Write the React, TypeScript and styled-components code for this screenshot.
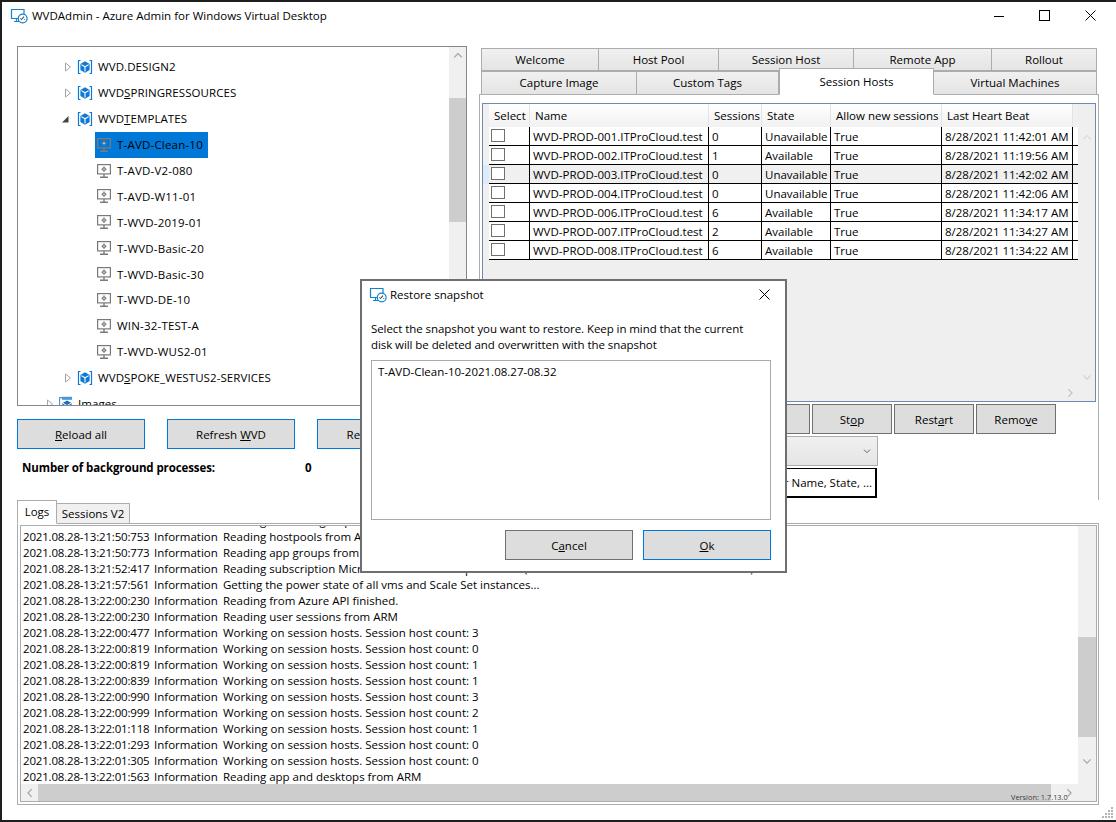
import React from 'react';
import styled, { createGlobalStyle } from 'styled-components';

const FONT = '"Open Sans", "Noto Sans", sans-serif';

const GlobalStyle = createGlobalStyle`
  html, body {
    margin: 0;
    padding: 0;
    background: #1e1e1e;
  }
  * {
    box-sizing: border-box;
  }
`;

// Outer window
const Window = styled.div`
  position: relative;
  width: 1116px;
  height: 822px;
  padding: 2px 0 2px 2px;
  background: #1e1e1e;
  font-family: ${FONT};
  font-size: 11.5px;
  color: #000;
  overflow: hidden;
`;

const Frame = styled.div`
  height: 100%;
  background: #fff;
  display: flex;
  flex-direction: column;
`;

const TitleBar = styled.div`
  height: 27px;
  flex: none;
  display: flex;
  align-items: center;
  padding-left: 8px;
  gap: 4px;
`;

const TitleText = styled.span`
  flex: 1;
`;

const WindowControls = styled.div`
  display: flex;
  align-items: center;
  padding-right: 20px;
  gap: 35px;
`;

const Content = styled.div`
  flex: 1;
  display: flex;
  flex-direction: column;
  padding: 17px 0 0 15px;
`;

const TopArea = styled.div`
  display: grid;
  grid-template-columns: 450px 620px;
  column-gap: 12px;
  height: 454px;
`;

const LeftColumn = styled.div`
  display: flex;
  flex-direction: column;
`;

// Tree
const Tree = styled.div`
  height: 360px;
  display: flex;
  border: 1px solid #828790;
  overflow: hidden;
`;

const TreeList = styled.div`
  flex: 1;
  padding-top: 7px;
  overflow: hidden;
`;

const TreeRow = styled.div<{ $indent: number }>`
  height: 25.9px;
  display: flex;
  align-items: center;
  padding-left: ${({ $indent }) => $indent}px;
  white-space: nowrap;
`;

const Expander = styled.span`
  width: 13px;
  display: flex;
  align-items: center;
  flex: none;
`;

const NodeLabel = styled.span<{ $selected?: boolean }>`
  height: 100%;
  display: flex;
  align-items: center;
  gap: 6px;
  padding: 0 5px 0 2px;
  letter-spacing: 0.2px;
  background: ${({ $selected }) => ($selected ? '#0078d7' : 'transparent')};
`;

const GroupLabel = styled.span`
  display: flex;
  align-items: center;
  gap: 5px;
  letter-spacing: 0.08px;
`;

const ScrollTrackV = styled.div<{ $width?: number }>`
  width: ${({ $width }) => $width ?? 17}px;
  flex: none;
  background: #f0f0f0;
  display: flex;
  flex-direction: column;
`;

const ScrollButton = styled.div<{ $size?: number; $end?: boolean }>`
  height: ${({ $size }) => $size ?? 17}px;
  flex: none;
  display: flex;
  align-items: center;
  justify-content: center;
  ${({ $end }) => ($end ? 'margin-top: auto;' : '')}
`;

const Thumb = styled.div<{ $offset: number; $length: number }>`
  margin-top: ${({ $offset }) => $offset}px;
  height: ${({ $length }) => $length}px;
  flex: none;
  background: #cdcdcd;
`;

const ButtonRow = styled.div`
  display: flex;
  gap: 22px;
  margin-top: 13px;
`;

const Button = styled.div<{ $focused?: boolean; $width?: number }>`
  width: ${({ $width }) => $width ?? 128}px;
  height: 30px;
  flex: none;
  display: flex;
  align-items: center;
  justify-content: center;
  background: #dddddd;
  border: 1px solid ${({ $focused }) => ($focused ? '#0078d7' : '#707070')};
  white-space: nowrap;
  overflow: hidden;
`;

const ProcessRow = styled.div`
  display: flex;
  margin-top: 9px;
  padding-left: 5px;
  height: 18px;
  align-items: center;
  font-weight: 700;
`;

const ProcessLabel = styled.span`
  width: 283px;
  letter-spacing: -0.1px;
`;

// Right tabs
const RightColumn = styled.div`
  padding-top: 2px;
  display: flex;
  flex-direction: column;
`;

const TabRow = styled.div<{ $overlap?: boolean }>`
  display: flex;
  height: ${({ $overlap }) => ($overlap ? '24px' : '23px')};
  margin-left: 2px;
  position: relative;
  z-index: 1;
  ${({ $overlap }) => ($overlap ? 'margin-bottom: -1px;' : '')}
`;

const Tab = styled.div<{ $width: number; $active?: boolean; $lower?: boolean }>`
  width: ${({ $width }) => $width}px;
  flex: none;
  display: flex;
  align-items: center;
  justify-content: center;
  border: 1px solid #acacac;
  border-left-width: ${({ $active }) => ($active ? '1px' : '0')};
  background: ${({ $active }) => ($active ? '#fff' : 'linear-gradient(#f0f0f0, #e5e5e5)')};
  ${({ $lower }) => ($lower ? 'padding-bottom: 2px;' : '')}
  ${({ $active }) =>
    $active ? 'border-bottom-color: #fff; margin-top: -3px; height: calc(100% + 3px); padding-bottom: 1px;' : ''}
  &:first-child {
    border-left-width: 1px;
  }
`;

const TabPanel = styled.div`
  flex: 1;
  border: 1px solid #acacac;
  border-bottom: none;
  padding: 8px 2px 0 2px;
  display: flex;
  flex-direction: column;
`;

// Session host grid
const HostGrid = styled.div`
  position: relative;
  height: 299px;
  flex: none;
  border: 1px solid #6d8bb0;
  background: #efefef;
`;

const COLUMNS = '6px 41px 179px 53px 69px 111px 131px 5px';

const GridHeader = styled.div`
  display: grid;
  grid-template-columns: ${COLUMNS};
  height: 23px;
  background: linear-gradient(#ffffff, #f1f1f1);
  margin-right: 17px;
`;

const HeaderCell = styled.div`
  display: flex;
  align-items: center;
  padding-left: 5px;
  border-right: 1px solid #e4e4e4;
  white-space: nowrap;
`;

const HeaderGap = styled.div`
  background: #f0f0f0;
`;

const GridRow = styled.div`
  display: grid;
  grid-template-columns: ${COLUMNS};
  height: 19px;
  margin-right: 17px;
`;

const RowMarker = styled.div<{ $current?: boolean }>`
  background: ${({ $current }) => ($current ? '#dcebf7' : '#f0f0f0')};
`;

const GridCell = styled.div<{ $current?: boolean; $open?: boolean }>`
  display: flex;
  align-items: center;
  padding-left: 3px;
  background: ${({ $current }) => ($current ? '#f0f0f0' : '#fff')};
  border-bottom: 1px solid #000;
  border-right: ${({ $open }) => ($open ? 'none' : '1px solid #000')};
  white-space: nowrap;
  overflow: hidden;
`;

const CheckBox = styled.span`
  width: 14px;
  height: 13px;
  margin: -2px 0 0 -1px;
  border: 1px solid #707070;
  background: #fff;
`;

const FloatingChevron = styled.span<{ $left: number; $top: number }>`
  position: absolute;
  left: ${({ $left }) => $left}px;
  top: ${({ $top }) => $top}px;
  display: flex;
`;

const ActionRow = styled.div`
  display: flex;
  gap: 2px;
  margin: 2px 0 0 2px;
`;

const Combo = styled.div`
  width: 394px;
  height: 30px;
  margin: 2px 0 0 2px;
  display: flex;
  align-items: center;
  justify-content: flex-end;
  padding-right: 6px;
  background: linear-gradient(#f0f0f0, #e5e5e5);
  border: 1px solid #acacac;
`;

const FilterBox = styled.div`
  width: 393px;
  height: 30px;
  margin: 2px 0 0 2px;
  display: flex;
  align-items: center;
  justify-content: flex-end;
  padding-right: 3px;
  background: #fff;
  border: 1px solid #000;
  border-right-width: 2px;
  border-bottom-width: 2px;
`;

// Logs
const LogTabs = styled.div`
  display: flex;
  align-items: flex-end;
  height: 24px;
  position: relative;
  z-index: 1;
  margin-bottom: -1px;
`;

const LogTab = styled.div<{ $active?: boolean; $width: number }>`
  width: ${({ $width }) => $width}px;
  height: ${({ $active }) => ($active ? '24px' : '21px')};
  display: flex;
  align-items: center;
  justify-content: center;
  border: 1px solid #acacac;
  background: ${({ $active }) => ($active ? '#fff' : '#f0f0f0')};
  ${({ $active }) => ($active ? 'border-bottom-color: #fff; padding-bottom: 1px;' : 'border-left: none;')}
`;

const LogPanel = styled.div`
  width: 1082px;
  height: 282px;
  border: 1px solid #acacac;
  padding: 1px 1px 2px 2px;
`;

const LogBox = styled.div`
  height: 100%;
  border: 1px solid #acacac;
  display: grid;
  grid-template-columns: 1fr 18px;
  grid-template-rows: 1fr 17px;
`;

const LogList = styled.div`
  overflow: hidden;
  padding-left: 2px;
`;

const LogLines = styled.div`
  margin-top: -14px;
`;

const LogLine = styled.div`
  display: flex;
  height: 16px;
  align-items: center;
  white-space: nowrap;
`;

const LogTime = styled.span`
  width: 131px;
  flex: none;
  letter-spacing: -0.18px;
`;

const LogLevel = styled.span`
  width: 69px;
  flex: none;
`;

const ScrollTrackH = styled.div`
  display: flex;
  background: #f0f0f0;
`;

const ArrowCell = styled.div`
  width: 17px;
  flex: none;
  display: flex;
  align-items: center;
  justify-content: center;
`;

const ThumbH = styled.div`
  width: 1013px;
  flex: none;
  background: #cdcdcd;
`;

const ScrollCorner = styled.div`
  background: #f0f0f0;
`;

const Version = styled.span`
  position: absolute;
  left: 1011px;
  top: 791px;
  font-size: 7.4px;
  line-height: 12px;
  color: #3c3c3c;
`;

const Grip = styled.svg`
  position: absolute;
  left: 1100px;
  top: 806px;
`;

// Dialog
const Dialog = styled.div`
  position: absolute;
  left: 360px;
  top: 279px;
  width: 427px;
  height: 294px;
  background: #fff;
  border: 2px solid #6f6f6f;
  padding: 0 14px 0 9px;
  display: flex;
  flex-direction: column;
  z-index: 5;
`;

const DialogTitle = styled.div`
  height: 27px;
  flex: none;
  display: flex;
  align-items: center;
  gap: 3px;
  margin-left: -2px;
`;

const DialogClose = styled.span`
  margin-left: auto;
  display: flex;
  margin-right: 1px;
`;

const DialogText = styled.p`
  margin: 13px 0 0;
  line-height: 16px;
  height: 32px;
  flex: none;
  letter-spacing: -0.07px;
`;

const SnapshotList = styled.div`
  height: 160px;
  flex: none;
  margin-top: 7px;
  border: 1px solid #aaaaaa;
  padding: 3px 6px;
  line-height: 16px;
`;

const DialogButtons = styled.div`
  display: flex;
  justify-content: flex-end;
  gap: 10px;
  margin-top: 10px;
`;

const AppIcon = () => (
  <svg width="18" height="16" viewBox="0 0 18 16" fill="none">
    <path d="M10 10.5H1.5V1.5H14V6" stroke="#1383d1" strokeWidth="1.2" />
    <path d="M4 13.5h5M6.5 10.5v3" stroke="#1383d1" strokeWidth="1.2" />
    <circle cx="12.7" cy="10.5" r="4.4" fill="#fff" stroke="#1383d1" strokeWidth="1.2" />
    <path d="M11 12l3-3.4" stroke="#4a4a4a" strokeWidth="1.1" />
    <path d="M10.3 10.5h1M14.2 11.5h1" stroke="#1383d1" />
  </svg>
);

const CubeIcon = () => (
  <svg width="16" height="16" viewBox="0 0 16 16" fill="none">
    <path d="M3.5 1.5h-2v13h2M12.5 1.5h2v13h-2" stroke="#0f78d4" strokeWidth="1.2" />
    <path d="M8 2.3 12.6 4.9v6.2L8 13.7 3.4 11.1V4.9z" fill="#0f78d4" />
    <path d="M4.3 5.6 8 7.8l3.7-2.2M8 7.8v4.6" stroke="#fff" strokeWidth="1.1" />
  </svg>
);

const VmIcon = () => (
  <svg width="14" height="16" viewBox="0 0 14 16" fill="none">
    <rect x="0.6" y="1.6" width="12.8" height="9.3" stroke="#7a7a7a" strokeWidth="1.2" />
    <path d="M7 11v2.4M3 14.2h8" stroke="#7a7a7a" strokeWidth="1.4" />
    <circle cx="7" cy="6.2" r="1.9" fill="#7a7a7a" />
    <path d="M7 3.4v5.6M4.4 6.2h5.2" stroke="#7a7a7a" strokeWidth="1" />
    <circle cx="7" cy="6.2" r="0.7" fill="#fff" />
  </svg>
);

const ImagesIcon = () => (
  <svg width="14" height="16" viewBox="0 0 14 16" fill="none">
    <path d="M0.6 1v13M0.6 1.6h2.6" stroke="#4a94d8" strokeWidth="1.1" />
    <rect x="3" y="0.8" width="10" height="3" fill="#4a94d8" />
    <path d="M8 4.5 12.5 7v5L8 14.5 3.5 12V7z" fill="#1470c4" />
    <path d="M4 7.3 8 9.6l4-2.3M8 9.6v4.6" stroke="#fff" strokeWidth="1" />
  </svg>
);

const Collapsed = () => (
  <svg width="8" height="10" viewBox="0 0 8 10" fill="none">
    <path d="M1.5 1v8L6.5 5z" fill="#fff" stroke="#a6a6a6" />
  </svg>
);

const ExpandedMark = styled.svg`
  margin-left: -3px;
`;

const ExpandedArrow = () => (
  <ExpandedMark width="10" height="10" viewBox="0 0 10 10">
    <path d="M1 8.5h6.5V2z" fill="#444" />
  </ExpandedMark>
);

const Chevron = ({
  dir,
  color = '#a6a6a6',
  size = 10,
}: {
  dir: 'up' | 'down' | 'left' | 'right';
  color?: string;
  size?: number;
}) => {
  const paths = {
    up: 'M1.5 7.5 6 3l4.5 4.5',
    down: 'M1.5 4 6 8.5 10.5 4',
    left: 'M8 1.5 3.5 6 8 10.5',
    right: 'M4 1.5 8.5 6 4 10.5',
  };
  return (
    <svg width={size} height={size} viewBox="0 0 12 12" fill="none">
      <path d={paths[dir]} stroke={color} strokeWidth="1.4" />
    </svg>
  );
};

const TOP_TABS = [
  { label: 'Welcome', width: 118 },
  { label: 'Host Pool', width: 120 },
  { label: 'Session Host', width: 135 },
  { label: 'Remote App', width: 138 },
  { label: 'Rollout', width: 105 },
];

const SECOND_TABS = [
  { label: 'Capture Image', width: 156 },
  { label: 'Custom Tags', width: 142 },
  { label: 'Session Hosts', width: 155, active: true },
  { label: 'Virtual Machines', width: 163 },
];

const VMS = ['T-AVD-V2-080', 'T-AVD-W11-01', 'T-WVD-2019-01', 'T-WVD-Basic-20', 'T-WVD-Basic-30', 'T-WVD-DE-10', 'WIN-32-TEST-A', 'T-WVD-WUS2-01'];

const HOSTS = [
  ['WVD-PROD-001.ITProCloud.test', '0', 'Unavailable', 'True', '8/28/2021 11:42:01 AM'],
  ['WVD-PROD-002.ITProCloud.test', '1', 'Available', 'True', '8/28/2021 11:19:56 AM'],
  ['WVD-PROD-003.ITProCloud.test', '0', 'Unavailable', 'True', '8/28/2021 11:42:02 AM'],
  ['WVD-PROD-004.ITProCloud.test', '0', 'Unavailable', 'True', '8/28/2021 11:42:06 AM'],
  ['WVD-PROD-006.ITProCloud.test', '6', 'Available', 'True', '8/28/2021 11:34:17 AM'],
  ['WVD-PROD-007.ITProCloud.test', '2', 'Available', 'True', '8/28/2021 11:34:27 AM'],
  ['WVD-PROD-008.ITProCloud.test', '6', 'Available', 'True', '8/28/2021 11:34:22 AM'],
];

const WORKING = 'Working on session hosts. Session host count: ';

const LOGS = [
  ['2021.08.28-13:21:50:741', 'Reading resource groups from ARM'],
  ['2021.08.28-13:21:50:753', 'Reading hostpools from ARM'],
  ['2021.08.28-13:21:50:773', 'Reading app groups from ARM'],
  ['2021.08.28-13:21:52:417', 'Reading subscription Microsoft Azure Subscription - Tail (06c05e86-0000-41c0-8888-101a12001070)'],
  ['2021.08.28-13:21:57:561', 'Getting the power state of all vms and Scale Set instances...'],
  ['2021.08.28-13:22:00:230', 'Reading from Azure API finished.'],
  ['2021.08.28-13:22:00:230', 'Reading user sessions from ARM'],
  ['2021.08.28-13:22:00:477', WORKING + '3'],
  ['2021.08.28-13:22:00:819', WORKING + '0'],
  ['2021.08.28-13:22:00:819', WORKING + '1'],
  ['2021.08.28-13:22:00:839', WORKING + '1'],
  ['2021.08.28-13:22:00:990', WORKING + '3'],
  ['2021.08.28-13:22:00:999', WORKING + '2'],
  ['2021.08.28-13:22:01:118', WORKING + '1'],
  ['2021.08.28-13:22:01:293', WORKING + '0'],
  ['2021.08.28-13:22:01:305', WORKING + '0'],
  ['2021.08.28-13:22:01:563', 'Reading app and desktops from ARM'],
];

const GRIP_DOTS = [
  [11, 1], [11, 4], [8, 4], [11, 7], [8, 7], [5, 7], [11, 10], [8, 10], [5, 10], [2, 10],
];

export default function App() {
  return (
    <Window>
      <GlobalStyle />
      <Frame>
        <TitleBar>
          <AppIcon />
          <TitleText>WVDAdmin - Azure Admin for Windows Virtual Desktop</TitleText>
          <WindowControls>
            <svg width="10" height="10" viewBox="0 0 10 10"><path d="M0 5.5h10" stroke="#000" /></svg>
            <svg width="11" height="11" viewBox="0 0 11 11" fill="none"><rect x="0.5" y="0.5" width="10" height="10" stroke="#000" /></svg>
            <svg width="11" height="11" viewBox="0 0 11 11" fill="none"><path d="M.5.5l10 10M10.5.5l-10 10" stroke="#000" /></svg>
          </WindowControls>
        </TitleBar>

        <Content>
          <TopArea>
            <LeftColumn>
              <Tree>
                <TreeList>
                  <TreeRow $indent={46}>
                    <Expander><Collapsed /></Expander>
                    <GroupLabel><CubeIcon />WVD.DESIGN2</GroupLabel>
                  </TreeRow>
                  <TreeRow $indent={46}>
                    <Expander><Collapsed /></Expander>
                    <GroupLabel><CubeIcon /><span>WVD<u>S</u>PRINGRESSOURCES</span></GroupLabel>
                  </TreeRow>
                  <TreeRow $indent={46}>
                    <Expander><ExpandedArrow /></Expander>
                    <GroupLabel><CubeIcon /><span>WVD<u>T</u>EMPLATES</span></GroupLabel>
                  </TreeRow>
                  <TreeRow $indent={77}>
                    <NodeLabel $selected><VmIcon />T-AVD-Clean-10</NodeLabel>
                  </TreeRow>
                  {VMS.map((name) => (
                    <TreeRow key={name} $indent={77}>
                      <NodeLabel><VmIcon />{name}</NodeLabel>
                    </TreeRow>
                  ))}
                  <TreeRow $indent={46}>
                    <Expander><Collapsed /></Expander>
                    <GroupLabel><CubeIcon /><span>WVD<u>S</u>POKE_WESTUS2-SERVICES</span></GroupLabel>
                  </TreeRow>
                  <TreeRow $indent={28}>
                    <Expander><Collapsed /></Expander>
                    <GroupLabel><ImagesIcon />Images</GroupLabel>
                  </TreeRow>
                </TreeList>
                <ScrollTrackV>
                  <ScrollButton><Chevron dir="up" /></ScrollButton>
                  <Thumb $offset={34} $length={124} />
                </ScrollTrackV>
              </Tree>

              <ButtonRow>
                <Button $focused><span><u>R</u>eload all</span></Button>
                <Button $focused><span>Refresh <u>W</u>VD</span></Button>
                <Button $focused><span>Refresh ARM</span></Button>
              </ButtonRow>

              <ProcessRow>
                <ProcessLabel>Number of background processes:</ProcessLabel>
                <span>0</span>
              </ProcessRow>
            </LeftColumn>

            <RightColumn>
              <TabRow>
                {TOP_TABS.map((t) => (
                  <Tab key={t.label} $width={t.width}>{t.label}</Tab>
                ))}
              </TabRow>
              <TabRow $overlap>
                {SECOND_TABS.map((t) => (
                  <Tab key={t.label} $width={t.width} $active={t.active} $lower>{t.label}</Tab>
                ))}
              </TabRow>
              <TabPanel>
                <HostGrid>
                  <GridHeader>
                    <HeaderGap />
                    <HeaderCell>Select</HeaderCell>
                    <HeaderCell>Name</HeaderCell>
                    <HeaderCell>Sessions</HeaderCell>
                    <HeaderCell>State</HeaderCell>
                    <HeaderCell>Allow new sessions</HeaderCell>
                    <HeaderCell>Last Heart Beat</HeaderCell>
                    <HeaderGap />
                  </GridHeader>
                  {HOSTS.map((host, i) => (
                    <GridRow key={host[0]}>
                      <RowMarker $current={i === 2} />
                      <GridCell $current={i === 2}><CheckBox /></GridCell>
                      {host.map((value, c) => (
                        <GridCell key={c} $current={i === 2}>{value}</GridCell>
                      ))}
                      <GridCell $open $current={i === 2} />
                    </GridRow>
                  ))}
                  <FloatingChevron $left={599} $top={29}><Chevron dir="up" color="#dcdcdc" /></FloatingChevron>
                  <FloatingChevron $left={599} $top={268}><Chevron dir="down" color="#cfcfcf" /></FloatingChevron>
                  <FloatingChevron $left={582} $top={284}><Chevron dir="right" color="#c4c4c4" /></FloatingChevron>
                </HostGrid>
                <ActionRow>
                  <Button $width={80} />
                  <Button $width={80} />
                  <Button $width={80} />
                  <Button $width={80} />
                  <Button $width={80}><span>St<u>o</u>p</span></Button>
                  <Button $width={80}><span>Rest<u>a</u>rt</span></Button>
                  <Button $width={80}><span>Remo<u>v</u>e</span></Button>
                </ActionRow>
                <Combo><Chevron dir="down" color="#555" size={8} /></Combo>
                <FilterBox>Filter Name, State, ...</FilterBox>
              </TabPanel>
            </RightColumn>
          </TopArea>

          <LogTabs>
            <LogTab $active $width={40}>Logs</LogTab>
            <LogTab $width={73}>Sessions V2</LogTab>
          </LogTabs>
          <LogPanel>
            <LogBox>
              <LogList>
                <LogLines>
                  {LOGS.map(([time, message], i) => (
                    <LogLine key={i}>
                      <LogTime>{time}</LogTime>
                      <LogLevel>Information</LogLevel>
                      <span>{message}</span>
                    </LogLine>
                  ))}
                </LogLines>
              </LogList>
              <ScrollTrackV $width={18}>
                <Thumb $offset={111} $length={100} />
                <ScrollButton $size={46} $end>
                  <Chevron dir="down" />
                </ScrollButton>
              </ScrollTrackV>
              <ScrollTrackH>
                <ArrowCell><Chevron dir="left" /></ArrowCell>
                <ThumbH />
              </ScrollTrackH>
              <ScrollCorner />
            </LogBox>
          </LogPanel>
        </Content>
      </Frame>

      <Version>Version: 1.7.13.0</Version>
      <FloatingChevron $left={1064} $top={788}><Chevron dir="right" /></FloatingChevron>

      <Grip width="14" height="13" viewBox="0 0 14 13">
        {GRIP_DOTS.map(([x, y]) => (
          <rect key={`${x}-${y}`} x={x} y={y} width="2" height="2" fill="#b4b4b4" />
        ))}
      </Grip>

      <Dialog>
        <DialogTitle>
          <AppIcon />
          <span>Restore snapshot</span>
          <DialogClose>
            <svg width="11" height="11" viewBox="0 0 11 11" fill="none"><path d="M.5.5l10 10M10.5.5l-10 10" stroke="#000" /></svg>
          </DialogClose>
        </DialogTitle>
        <DialogText>
          Select the snapshot you want to restore. Keep in mind that the current
          <br />
          disk will be deleted and overwritten with the snapshot
        </DialogText>
        <SnapshotList>T-AVD-Clean-10-2021.08.27-08.32</SnapshotList>
        <DialogButtons>
          <Button><span>C<u>a</u>ncel</span></Button>
          <Button $focused><span><u>O</u>k</span></Button>
        </DialogButtons>
      </Dialog>
    </Window>
  );
}
